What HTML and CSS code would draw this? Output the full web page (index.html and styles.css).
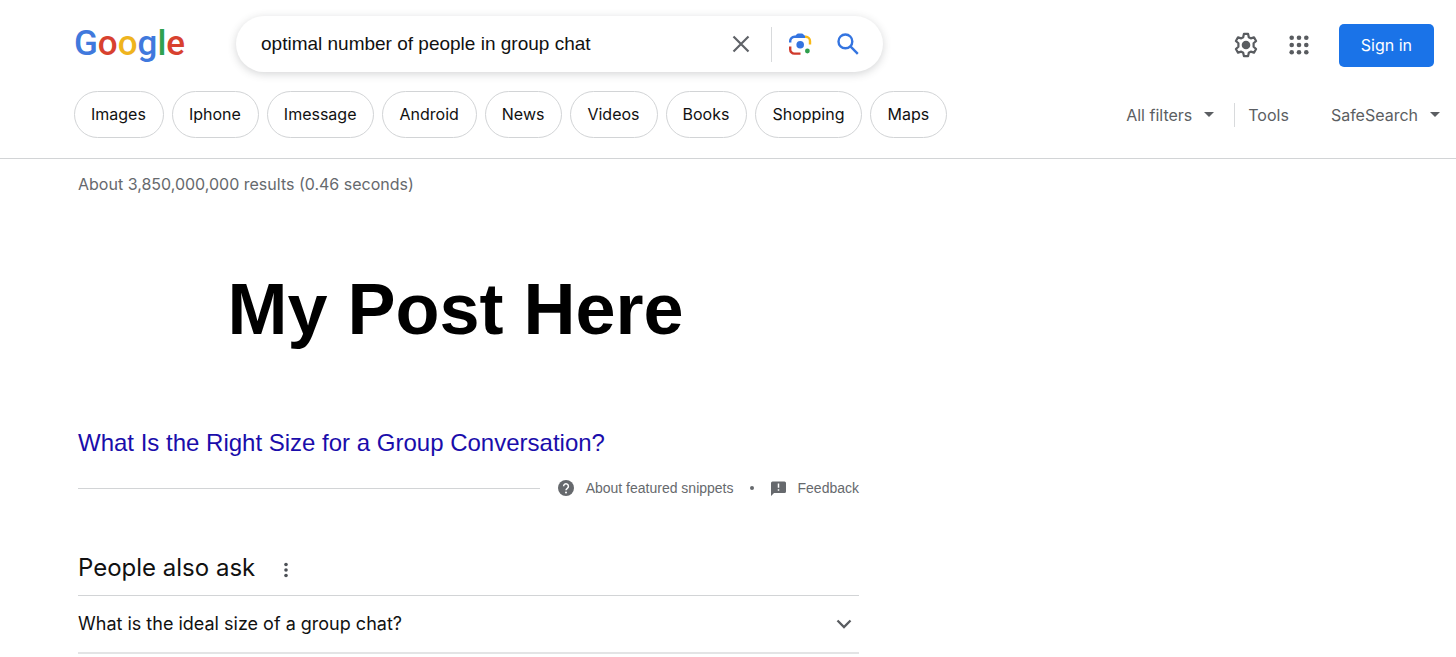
FILE: index.html
```html
<!DOCTYPE html>
<html lang="en">
<head>
<meta charset="utf-8">
<meta name="viewport" content="width=device-width, initial-scale=1">
<title>optimal number of people in group chat - Google Search</title>
<link rel="stylesheet" href="styles.css">
</head>
<body>
<header class="header">
  <div class="topbar">
    <a class="logo" href="#" aria-label="Google"><span class="blue">G</span><span class="red">o</span><span class="yellow">o</span><span class="blue">g</span><span class="green">l</span><span class="red">e</span></a>
    <form class="search" role="search">
      <input class="search-input" type="text" aria-label="Search" value="optimal number of people in group chat">
      <button class="icon-button" type="button" aria-label="Clear">
        <svg width="18" height="18" viewBox="0 0 18 18"><path d="M1.5 1.5l15 15M16.5 1.5l-15 15" fill="none" stroke="#606368" stroke-width="2.2"/></svg>
      </button>
      <span class="search-divider"></span>
      <button class="icon-button lens" type="button" aria-label="Search by image">
        <svg width="24" height="24" viewBox="0 0 24 24" fill="none" stroke-width="2.4">
          <path d="M2.200 10.500V9a4.200 4.200 0 0 1 4.200-4.200H17" stroke="#3474e0"/>
          <path d="M7 4.800c1-1.600 1.700-3.200 3.400-3.200h3.200c1.700 0 2.400 1.600 3.400 3.200z" fill="#3474e0"/>
          <path d="M17 4.800h.8A4.200 4.200 0 0 1 22 9v3.500" stroke="#f9b916"/>
          <path d="M2.200 14.500v2.900a4.200 4.200 0 0 0 4.200 4.200H12.500" stroke="#d03a2c"/>
          <circle cx="12.200" cy="12.800" r="3.800" fill="#3474e0"/>
          <circle cx="19.400" cy="19" r="2.400" fill="#2e9e4c"/>
        </svg>
      </button>
      <button class="icon-button" type="submit" aria-label="Search">
        <svg width="22" height="22" viewBox="0 0 22 22" fill="none" stroke="#3474e0" stroke-width="2.4"><circle cx="8.4" cy="8.4" r="6.9"/><path d="M13.2 13.2l7.6 7.6"/></svg>
      </button>
    </form>
    <div class="account">
      <button class="icon-button" type="button" aria-label="Settings">
        <svg width="26" height="26" viewBox="0 0 26 26"><path d="M10.9 1.9h4.2l.7 3.3 2 1.2 3.2-1 2.1 3.6-2.5 2.3v3.4l2.5 2.3-2.1 3.6-3.2-1-2 1.2-.7 3.3h-4.2l-.7-3.3-2-1.2-3.2 1L2.900 17l2.500-2.300v-3.400L2.900 9 5 5.400l3.200 1 2-1.200z" fill="none" stroke="#595c60" stroke-width="2.2" stroke-linejoin="round"/><circle cx="13" cy="13" r="4.300" fill="#595c60"/></svg>
      </button>
      <button class="icon-button" type="button" aria-label="Google apps">
        <svg width="20" height="20" viewBox="0 0 20 20" fill="#595c60"><circle cx="2.700" cy="2.700" r="2.300"/><circle cx="10" cy="2.700" r="2.300"/><circle cx="17.300" cy="2.700" r="2.300"/><circle cx="2.700" cy="10" r="2.300"/><circle cx="10" cy="10" r="2.300"/><circle cx="17.300" cy="10" r="2.300"/><circle cx="2.700" cy="17.300" r="2.300"/><circle cx="10" cy="17.300" r="2.300"/><circle cx="17.300" cy="17.300" r="2.300"/></svg>
      </button>
      <a class="sign-in" href="#">Sign in</a>
    </div>
  </div>
  <div class="filters">
    <nav class="chips">
      <a class="chip" href="#">Images</a>
      <a class="chip" href="#">Iphone</a>
      <a class="chip" href="#">Imessage</a>
      <a class="chip" href="#">Android</a>
      <a class="chip" href="#">News</a>
      <a class="chip" href="#">Videos</a>
      <a class="chip" href="#">Books</a>
      <a class="chip" href="#">Shopping</a>
      <a class="chip" href="#">Maps</a>
    </nav>
    <div class="tools">
      <button class="tool" type="button">All filters <span class="caret"></span></button>
      <button class="tool tool-main" type="button">Tools</button>
      <button class="tool" type="button">SafeSearch <span class="caret"></span></button>
    </div>
  </div>
</header>
<main class="results">
  <p class="stats">About 3,850,000,000 results (0.46 seconds)</p>
  <h1 class="post">My Post Here</h1>
  <h2 class="result-title"><a href="#">What Is the Right Size for a Group Conversation?</a></h2>
  <div class="snippet-footer">
    <span class="rule"></span>
    <a class="footer-link" href="#">
      <svg width="16" height="16" viewBox="0 0 16 16"><circle cx="8" cy="8" r="8" fill="#66696d"/><path d="M5.600 6.300a2.400 2.400 0 1 1 3.700 2C8.400 8.900 8 9.300 8 10.300" fill="none" stroke="#fff" stroke-width="1.500"/><circle cx="8" cy="12.500" r="1" fill="#fff"/></svg>
      About featured snippets</a>
    <span class="dot"></span>
    <a class="footer-link" href="#">
      <svg width="15" height="15" viewBox="0 0 15 15"><path d="M1.500.5h12q1.500 0 1.500 1.500v8.500q0 1.500-1.500 1.500H3L0 15V2Q0 .5 1.500.5z" fill="#66696d"/><path d="M7.500 2.500v4.300M7.500 8.200v1.600" stroke="#fff" stroke-width="1.500"/></svg>
      Feedback</a>
  </div>
  <section class="questions">
    <div class="questions-head">
      <h2 class="questions-title">People also ask</h2>
      <button class="icon-button more" type="button" aria-label="About this result">
        <svg width="4" height="16" viewBox="0 0 4 16" fill="#4d5156"><circle cx="2" cy="2.500" r="1.800"/><circle cx="2" cy="8" r="1.800"/><circle cx="2" cy="13.500" r="1.800"/></svg>
      </button>
    </div>
    <button class="question" type="button">What is the ideal size of a group chat?
      <svg width="16" height="10" viewBox="0 0 16 10"><path d="M1.500 1.500L8 8l6.500-6.500" fill="none" stroke="#595c60" stroke-width="2.300"/></svg>
    </button>
  </section>
</main>
</body>
</html>
```
FILE: styles.css
```css
* { box-sizing: border-box; }
body {
  margin: 0;
  background: #fff;
  color: #111;
  font-family: Inter, Roboto, sans-serif;
  font-size: 16px;
}
button, input { font: inherit; color: inherit; border: 0; background: none; padding: 0; }
a { color: inherit; text-decoration: none; }
svg { display: block; flex: none; }
h1, h2, p { margin: 0; }

.header { border-bottom: 1px solid #d2d4d6; padding: 16px 16px 20px 74px; }
.topbar { display: flex; align-items: center; height: 56px; }
.logo { width: 162px; font-family: Roboto, sans-serif; font-size: 35px; line-height: 48px; font-weight: 500; }
.blue { color: #4079dd; }
.red { color: #d8412f; }
.yellow { color: #efb41e; }
.green { color: #2fa24f; }

.search {
  display: flex;
  align-items: center;
  flex: 0 1 647px;
  height: 56px;
  padding: 0 24px 0 25px;
  border-radius: 28px;
  box-shadow: 0 2px 8px rgba(60, 64, 67, .22);
}
.search-input {
  flex: 1;
  min-width: 0;
  outline: 0;
  font-family: "Liberation Sans", Arial, sans-serif;
  font-size: 19px;
}
.icon-button { display: grid; place-items: center; cursor: pointer; }
.search-divider { width: 1px; height: 35px; margin: 0 16px 0 21px; background: #d8dadc; }
.lens { margin-right: 25px; }

.account { display: flex; align-items: center; gap: 30px; margin-left: auto; padding: 2px 6px 0 24px; }
.sign-in {
  padding: 0 22px;
  border-radius: 5px;
  background: #1a73e8;
  color: #fff;
  line-height: 43px;
  white-space: nowrap;
}

.filters { display: flex; align-items: center; justify-content: space-between; margin-top: 19px; }
.chips { display: flex; gap: 8px; }
.chip { padding: 0 17px 0 16px; border: 1px solid #d2d4d6; border-radius: 24px; line-height: 45px; }
.tools { display: flex; align-items: center; color: #5b5e62; }
.tool { display: flex; align-items: center; gap: 12px; white-space: nowrap; }
.tool-main { margin: 0 42px 0 20px; padding-left: 13px; border-left: 1px solid #d8dadc; line-height: 24px; }
.caret { border: 5px solid transparent; border-top-color: #5b5e62; border-bottom: 0; }

.results { max-width: 859px; padding: 14px 0 0 78px; }
.stats { color: #66696d; line-height: 22px; }
.post {
  margin-top: 72px;
  padding-right: 26px;
  color: #000;
  font-family: "Liberation Sans", Arial, sans-serif;
  font-size: 72px;
  line-height: 84px;
  text-align: center;
}
.result-title {
  margin-top: 77px;
  color: #1a0dab;
  font-family: "Liberation Sans", Arial, sans-serif;
  font-size: 24px;
  font-weight: 400;
  line-height: 30px;
}
.snippet-footer {
  display: flex;
  align-items: center;
  margin-top: 20px;
  color: #66696d;
  font-family: "Liberation Sans", Arial, sans-serif;
  font-size: 14px;
  line-height: 20px;
}
.rule { flex: 1; height: 1px; margin-right: 18px; background: #d2d4d6; }
.footer-link { display: flex; align-items: center; gap: 12px; }
.dot { width: 4px; height: 4px; margin: 0 17px 0 16px; border-radius: 50%; background: #66696d; }
.questions { margin-top: 53px; }
.questions-head { display: flex; align-items: center; gap: 29px; padding-bottom: 10px; border-bottom: 1px solid #d2d4d6; }
.questions-title { font-size: 24px; font-weight: 400; line-height: 34px; }
.more { padding-top: 4px; }
.question {
  display: flex;
  align-items: center;
  justify-content: space-between;
  width: 100%;
  padding: 0 7px 0 0;
  border-bottom: 2px solid #e3e4e5;
  font-size: 18px;
  line-height: 56px;
  text-align: left;
}
```
